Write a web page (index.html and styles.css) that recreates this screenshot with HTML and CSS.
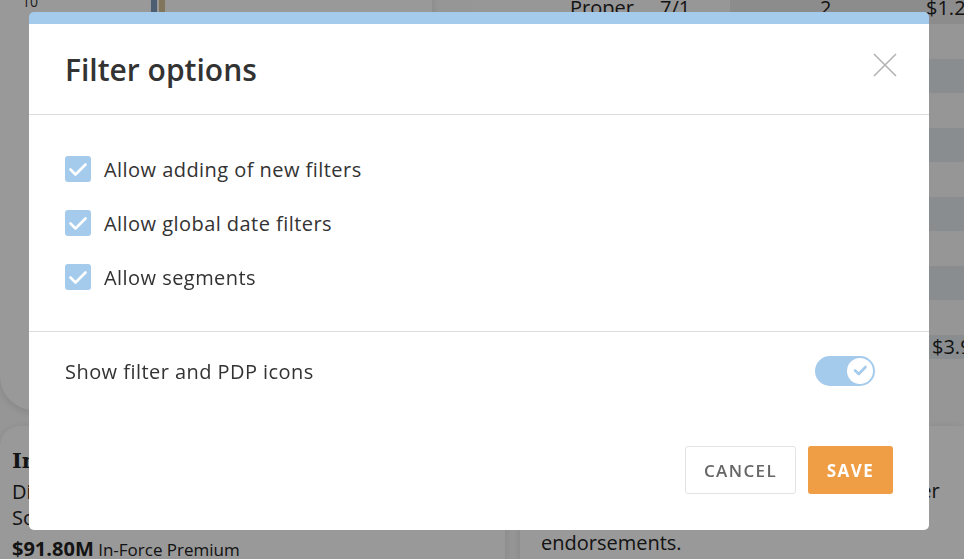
FILE: index.html
```html
<!DOCTYPE html>
<html lang="en">
<head>
<meta charset="utf-8">
<title>Filter options</title>
<link rel="stylesheet" href="styles.css">
</head>
<body>
<div class="page">
  <div class="top">
    <section class="chart-card">
      <span class="axis">10</span>
      <div class="bars"><span class="bar blue"></span><span class="bar gold"></span></div>
    </section>
    <section class="table">
      <div class="thead"><span class="c1">Proper</span><span class="c2">7/1</span><span class="c3">2</span><span class="c4">$1.2</span></div>
      <div class="row"></div><div class="row alt"></div>
      <div class="row"></div><div class="row alt"></div>
      <div class="row"></div><div class="row alt"></div>
      <div class="row"></div><div class="row alt"></div>
      <div class="row"></div>
      <div class="row alt total"><span class="c4">$3.9</span></div>
    </section>
  </div>
  <div class="bottom">
    <section class="info-card">
      <h2 class="info-title">Inside Sales</h2>
      <p class="info-text">Direct written premium by region<br>Sorted by agency performance over time</p>
      <p class="info-stat"><strong>$91.80M</strong> In-Force Premium</p>
    </section>
    <section class="info-card right">
      <p class="info-text">Policies with pending renewals shown over<br>the current quarter, including many<br>endorsements.</p>
    </section>
  </div>
</div>

<div class="overlay"></div>

<div class="modal" role="dialog" aria-labelledby="dlg-title">
  <header class="modal-header">
    <h1 id="dlg-title" class="modal-title">Filter options</h1>
    <button class="close" aria-label="Close">
      <svg width="26" height="26" viewBox="0 0 26 26"><path d="M2 2 L24 24 M24 2 L2 24" stroke="#b3b3b3" stroke-width="1.6" fill="none"/></svg>
    </button>
  </header>
  <div class="modal-body">
    <label class="check-row">
      <span class="checkbox"><svg width="26" height="26" viewBox="0 0 26 26"><path d="M5.5 13.5 L10.5 18.5 L20.5 8.5" stroke="#fff" stroke-width="2.6" fill="none" stroke-linecap="round" stroke-linejoin="round"/></svg></span>
      <span class="label">Allow adding of new filters</span>
    </label>
    <label class="check-row">
      <span class="checkbox"><svg width="26" height="26" viewBox="0 0 26 26"><path d="M5.5 13.5 L10.5 18.5 L20.5 8.5" stroke="#fff" stroke-width="2.6" fill="none" stroke-linecap="round" stroke-linejoin="round"/></svg></span>
      <span class="label">Allow global date filters</span>
    </label>
    <label class="check-row">
      <span class="checkbox"><svg width="26" height="26" viewBox="0 0 26 26"><path d="M5.5 13.5 L10.5 18.5 L20.5 8.5" stroke="#fff" stroke-width="2.6" fill="none" stroke-linecap="round" stroke-linejoin="round"/></svg></span>
      <span class="label">Allow segments</span>
    </label>
  </div>
  <div class="modal-section">
    <div class="toggle-row">
      <span class="label">Show filter and PDP icons</span>
      <span class="toggle"><span class="knob"><svg width="26" height="26" viewBox="0 0 26 26"><path d="M8 12.5 L11.8 16 L18.5 9" stroke="#a5cbec" stroke-width="2.6" fill="none" stroke-linecap="round" stroke-linejoin="round"/></svg></span></span>
    </div>
  </div>
  <footer class="modal-footer">
    <button class="btn btn-cancel">CANCEL</button>
    <button class="btn btn-save">SAVE</button>
  </footer>
</div>
</body>
</html>
```

FILE: styles.css
```css
* { box-sizing: border-box; }
html, body { margin: 0; padding: 0; }
body {
  width: 964px;
  height: 559px;
  overflow: hidden;
  background: #fbfbfb;
  font-family: "Open Sans", "Noto Sans", sans-serif;
  color: #222;
}

/* ---------- background page ---------- */
.page { width: 964px; }
.top {
  display: grid;
  grid-template-columns: 432px 1fr;
  column-gap: 40px;
  height: 410px;
}
.chart-card {
  background: #fff;
  border-radius: 0 0 0 34px;
  box-shadow: 0 2px 10px rgba(0,0,0,0.12);
  margin-top: -20px;
  padding: 8px 0 0 22px;
  display: flex;
  gap: 120px;
}
.axis { font-size: 14px; color: #333; margin-top: 4px; }
.bars { display: flex; gap: 2px; margin-left: -7px; }
.bar { width: 6px; height: 32px; }
.bar.blue { background: #7f9fbf; }
.bar.gold { background: #d8c59a; }

.table { margin-top: -10px; display: flex; flex-direction: column; }
.thead {
  height: 34px;
  display: flex;
  align-items: center;
  font-size: 20px;
  color: #222;
  background: linear-gradient(90deg, #fcfcfc 0 258px, #eaeaea 258px);
}
.thead .c1 { margin-left: 98px; width: 90px; }
.thead .c2 { width: 160px; }
.thead .c3 { width: 106px; }
.row { height: 34.5px; background: #fbfbfb; display: flex; align-items: center; }
.row.alt { background: #e4ebf0; }
.row.total { height: 24px; font-size: 20px; color: #222; }
.row .c4 { margin-left: 460px; }
.thead .c4 { margin-left: 0; }

.bottom {
  display: grid;
  grid-template-columns: 505px 1fr;
  column-gap: 15px;
  margin-top: 16px;
}
.info-card {
  background: #fff;
  border-radius: 20px 0 0 0;
  box-shadow: 0 2px 10px rgba(0,0,0,0.12);
  padding: 22px 12px 0;
  height: 160px;
}
.info-card.right { padding: 52px 21px 0; }
.info-title {
  margin: 0 0 6px;
  font-family: "DejaVu Serif", "Liberation Serif", serif;
  font-size: 21px;
  font-weight: bold;
  color: #222;
}
.info-text { margin: 0; font-size: 20px; line-height: 26px; color: #222; }
.info-stat { margin: 4px 0 0; font-size: 17px; color: #222; }
.info-stat strong { font-size: 20px; }

.overlay {
  position: fixed;
  inset: 0;
  background: rgba(0,0,0,0.4);
}

/* ---------- modal ---------- */
.modal {
  position: fixed;
  left: 29px;
  top: 12px;
  width: 900px;
  height: 518px;
  background: #fff;
  border-top: 12px solid #a4cbeb;
  border-radius: 5px;
  display: flex;
  flex-direction: column;
  color: #333;
}
.modal-header {
  height: 91px;
  border-bottom: 1px solid #dcdcdc;
  display: flex;
  align-items: center;
  justify-content: space-between;
  padding: 0 31px 0 36px;
}
.modal-title {
  margin: 0;
  font-size: 30px;
  font-weight: 600;
  color: #333;
}
.close {
  border: 0;
  background: none;
  padding: 0;
  width: 26px;
  height: 26px;
  margin-bottom: 8px;
  cursor: pointer;
}
.close svg { display: block; }

.modal-body {
  padding: 27px 36px;
  border-bottom: 1px solid #dcdcdc;
  display: flex;
  flex-direction: column;
}
.check-row {
  height: 54px;
  display: flex;
  align-items: center;
  gap: 13px;
}
.checkbox {
  width: 26px;
  height: 26px;
  border-radius: 3px;
  background: #a5cbec;
  display: block;
}
.checkbox svg { display: block; }
.label { font-size: 20px; letter-spacing: 0.45px; color: #333; }

.modal-section { padding: 24px 54px 0 36px; }
.toggle-row {
  height: 30px;
  display: flex;
  align-items: center;
  justify-content: space-between;
}
.toggle {
  width: 60px;
  height: 30px;
  border-radius: 15px;
  background: #a5cbec;
  display: flex;
  align-items: center;
  justify-content: flex-end;
  padding-right: 2px;
}
.knob {
  width: 26px;
  height: 26px;
  border-radius: 50%;
  background: #fff;
  display: block;
}
.knob svg { display: block; }

.modal-footer {
  margin-top: auto;
  padding: 0 36px 36px;
  display: flex;
  justify-content: flex-end;
  gap: 12px;
}
.btn {
  height: 48px;
  border-radius: 3px;
  font-family: "Open Sans", "Noto Sans", sans-serif;
  font-size: 17px;
  font-weight: 600;
  letter-spacing: 1.4px;
  cursor: pointer;
}
.btn-cancel {
  width: 111px;
  background: #fff;
  border: 1px solid #e3e3e3;
  color: #666;
}
.btn-save {
  width: 85px;
  background: #ef9e45;
  border: 0;
  color: #fff;
  font-weight: 700;
}
```
